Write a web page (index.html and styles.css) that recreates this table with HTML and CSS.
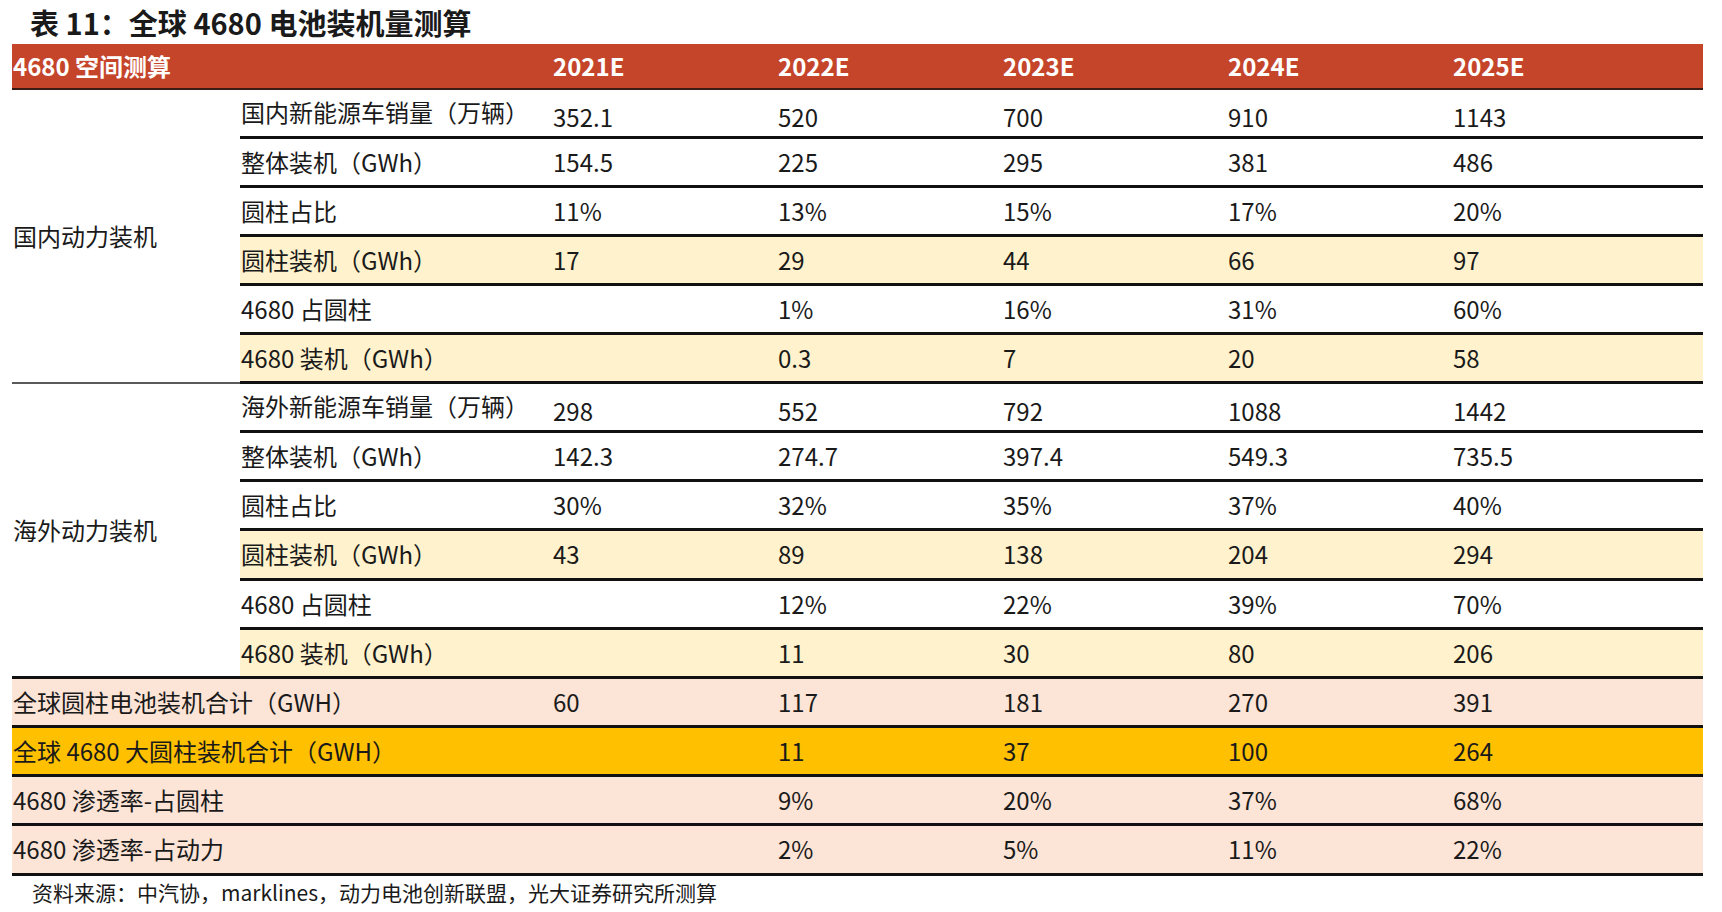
FILE: index.html
```html
<!DOCTYPE html>
<html lang="zh-CN">
<head>
<meta charset="utf-8">
<title>表 11：全球 4680 电池装机量测算</title>
<link rel="stylesheet" href="styles.css">
</head>
<body>
<div class="page">
  <h1 class="title">表 11：全球 4680 电池装机量测算</h1>
  <div class="grid">
    <div class="row head">
      <div class="span2">4680 空间测算</div>
      <div>2021E</div><div>2022E</div><div>2023E</div><div>2024E</div><div>2025E</div>
    </div>

    <div class="group g1">国内动力装机</div>
    <div class="row first"><div>国内新能源车销量（万辆）</div><div>352.1</div><div>520</div><div>700</div><div>910</div><div>1143</div></div>
    <div class="row"><div>整体装机（GWh）</div><div>154.5</div><div>225</div><div>295</div><div>381</div><div>486</div></div>
    <div class="row"><div>圆柱占比</div><div>11%</div><div>13%</div><div>15%</div><div>17%</div><div>20%</div></div>
    <div class="row yellow"><div>圆柱装机（GWh）</div><div>17</div><div>29</div><div>44</div><div>66</div><div>97</div></div>
    <div class="row"><div>4680 占圆柱</div><div></div><div>1%</div><div>16%</div><div>31%</div><div>60%</div></div>
    <div class="row yellow"><div>4680 装机（GWh）</div><div></div><div>0.3</div><div>7</div><div>20</div><div>58</div></div>

    <div class="group g2">海外动力装机</div>
    <div class="row first"><div>海外新能源车销量（万辆）</div><div>298</div><div>552</div><div>792</div><div>1088</div><div>1442</div></div>
    <div class="row"><div>整体装机（GWh）</div><div>142.3</div><div>274.7</div><div>397.4</div><div>549.3</div><div>735.5</div></div>
    <div class="row"><div>圆柱占比</div><div>30%</div><div>32%</div><div>35%</div><div>37%</div><div>40%</div></div>
    <div class="row yellow"><div>圆柱装机（GWh）</div><div>43</div><div>89</div><div>138</div><div>204</div><div>294</div></div>
    <div class="row"><div>4680 占圆柱</div><div></div><div>12%</div><div>22%</div><div>39%</div><div>70%</div></div>
    <div class="row yellow"><div>4680 装机（GWh）</div><div></div><div>11</div><div>30</div><div>80</div><div>206</div></div>

    <div class="row pink"><div class="span2">全球圆柱电池装机合计（GWH）</div><div>60</div><div>117</div><div>181</div><div>270</div><div>391</div></div>
    <div class="row orange"><div class="span2">全球 4680 大圆柱装机合计（GWH）</div><div></div><div>11</div><div>37</div><div>100</div><div>264</div></div>
    <div class="row pink"><div class="span2">4680 渗透率-占圆柱</div><div></div><div>9%</div><div>20%</div><div>37%</div><div>68%</div></div>
    <div class="row pink"><div class="span2">4680 渗透率-占动力</div><div></div><div>2%</div><div>5%</div><div>11%</div><div>22%</div></div>
  </div>
  <p class="source">资料来源：中汽协，marklines，动力电池创新联盟，光大证券研究所测算</p>
</div>
</body>
</html>
```

FILE: styles.css
```css
html, body {
  margin: 0;
  padding: 0;
  background: #ffffff;
}

body {
  font-family: "Noto Sans CJK SC", "Noto Sans", sans-serif;
  color: #1a1a1a;
}

.page {
  padding-left: 12px;
  width: 1691px;
}

.title {
  margin: 0;
  height: 44px;
  line-height: 44px;
  padding-left: 18px;
  font-size: 29px;
  font-weight: 700;
  color: #1a1a1a;
}

.grid {
  display: grid;
  grid-template-columns: 228px 312px 225px 225px 225px 225px 251px;
  grid-template-rows: 46px 49px 49px 49px 49px 49px 49px 49px 49px 49px 50px 49px 49px 49px 49px 49px 50px;
  font-size: 24px;
  line-height: 1.2;
}

.row {
  display: contents;
}

.row > div,
.group {
  box-sizing: border-box;
  display: flex;
  align-items: center;
  padding-left: 1px;
  white-space: nowrap;
  border-bottom: 3px solid #111111;
}

.span2 {
  grid-column: span 2;
}

.head > div {
  background: #c5452b;
  color: #ffffff;
  font-weight: 700;
  border-bottom: 2px solid #3a1c14;
}

.group {
  grid-row: span 6;
  background: #ffffff;
}

.g1 {
  border-bottom: 2px solid #5a5a5a;
}

.first > div:not(:first-child) {
  padding-top: 8px;
}

.first > div:first-child {
  padding-bottom: 2px;
}

.yellow > div {
  background: #fff2cc;
}

.pink > div {
  background: #fce4d6;
}

.orange > div {
  background: #ffc000;
}

.source {
  margin: 2px 0 0 0;
  padding-left: 20px;
  font-size: 21px;
  line-height: 28px;
  color: #1a1a1a;
}
```
